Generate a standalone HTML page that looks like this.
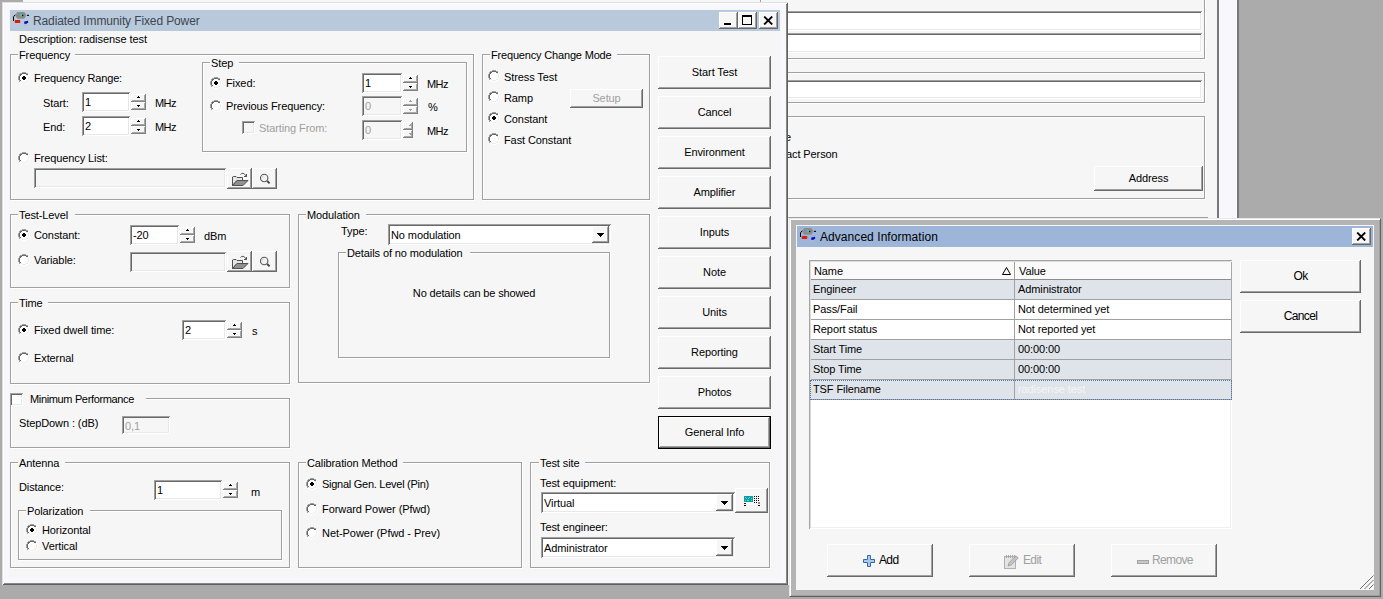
<!DOCTYPE html>
<html><head><meta charset="utf-8"><title>Radiated Immunity Fixed Power</title><style>
html,body{margin:0;padding:0;background:#ababab;}
body{width:1383px;height:599px;overflow:hidden;position:relative;font-family:"Liberation Sans",sans-serif;font-size:11px;}
body div,body svg{position:absolute;box-sizing:border-box;}
.t{white-space:nowrap;letter-spacing:-0.1px;}
.win{background:#f6f6f6;box-shadow:inset 1px 1px 0 #e0e0e0,inset -1px -1px 0 #606060,inset 2px 2px 0 #fff,inset -2px -2px 0 #888,inset 0 0 0 7px #f8f8fc;}
.win2{background:#f6f6f6;border:1px solid;border-color:#e8e8e8 #606060 #606060 #e8e8e8;box-shadow:inset 1px 1px 0 #fff,inset -1px -1px 0 #a0a0a0,inset 0 0 0 6px #b4b4b4;}
.grp{border:1px solid #a0a0a0;box-shadow:1px 1px 0 #fff,inset 1px 1px 0 #fff;}
.btn{background:#f6f6f6;box-shadow:inset -1px -1px 0 #696969,inset 1px 1px 0 #fff,inset -2px -2px 0 #a0a0a0;}
.btn1{background:#f6f6f6;box-shadow:inset -1px -1px 0 #808080,inset 1px 1px 0 #fff,inset -2px -2px 0 #a8a8a8;}
.edit{background:#fff;box-shadow:inset 1px 1px 0 #a0a0a0,inset -1px -1px 0 #fff,inset 2px 2px 0 #696969,inset -2px -2px 0 #e8e8e8;}
.edit.dis{background:#f6f6f6;}
.lv{background:#fff;box-shadow:inset 1px 1px 0 #a4a4a4,inset -1px -1px 0 #fff,inset 2px 2px 0 #dcdcdc,inset -2px -2px 0 #f0f0f0;}
.hdr{background:#f6f6f6;box-shadow:inset -1px -1px 0 #808080,inset 1px 1px 0 #fff;}
</style></head><body>
<svg width="0" height="0" style="left:0;top:0"><defs><g id="ru"><rect x="4" y="0" width="4" height="1" fill="#a0a0a0"/><rect x="2" y="1" width="2" height="1" fill="#a0a0a0"/><rect x="4" y="1" width="4" height="1" fill="#696969"/><rect x="8" y="1" width="2" height="1" fill="#a0a0a0"/><rect x="1" y="2" width="1" height="1" fill="#a0a0a0"/><rect x="2" y="2" width="2" height="1" fill="#696969"/><rect x="4" y="2" width="4" height="1" fill="#ffffff"/><rect x="8" y="2" width="2" height="1" fill="#696969"/><rect x="10" y="2" width="1" height="1" fill="#ffffff"/><rect x="1" y="3" width="1" height="1" fill="#a0a0a0"/><rect x="2" y="3" width="1" height="1" fill="#696969"/><rect x="3" y="3" width="6" height="1" fill="#ffffff"/><rect x="9" y="3" width="1" height="1" fill="#ececec"/><rect x="10" y="3" width="1" height="1" fill="#ffffff"/><rect x="0" y="4" width="1" height="1" fill="#a0a0a0"/><rect x="1" y="4" width="1" height="1" fill="#696969"/><rect x="2" y="4" width="8" height="1" fill="#ffffff"/><rect x="10" y="4" width="1" height="1" fill="#ececec"/><rect x="11" y="4" width="1" height="1" fill="#ffffff"/><rect x="0" y="5" width="1" height="1" fill="#a0a0a0"/><rect x="1" y="5" width="1" height="1" fill="#696969"/><rect x="2" y="5" width="8" height="1" fill="#ffffff"/><rect x="10" y="5" width="1" height="1" fill="#ececec"/><rect x="11" y="5" width="1" height="1" fill="#ffffff"/><rect x="0" y="6" width="1" height="1" fill="#a0a0a0"/><rect x="1" y="6" width="1" height="1" fill="#696969"/><rect x="2" y="6" width="8" height="1" fill="#ffffff"/><rect x="10" y="6" width="1" height="1" fill="#ececec"/><rect x="11" y="6" width="1" height="1" fill="#ffffff"/><rect x="0" y="7" width="1" height="1" fill="#a0a0a0"/><rect x="1" y="7" width="1" height="1" fill="#696969"/><rect x="2" y="7" width="8" height="1" fill="#ffffff"/><rect x="10" y="7" width="1" height="1" fill="#ececec"/><rect x="11" y="7" width="1" height="1" fill="#ffffff"/><rect x="1" y="8" width="1" height="1" fill="#a0a0a0"/><rect x="2" y="8" width="1" height="1" fill="#696969"/><rect x="3" y="8" width="6" height="1" fill="#ffffff"/><rect x="9" y="8" width="1" height="1" fill="#ececec"/><rect x="10" y="8" width="1" height="1" fill="#ffffff"/><rect x="1" y="9" width="1" height="1" fill="#a0a0a0"/><rect x="2" y="9" width="2" height="1" fill="#ececec"/><rect x="4" y="9" width="4" height="1" fill="#ffffff"/><rect x="8" y="9" width="2" height="1" fill="#ececec"/><rect x="10" y="9" width="1" height="1" fill="#ffffff"/><rect x="2" y="10" width="2" height="1" fill="#ffffff"/><rect x="4" y="10" width="4" height="1" fill="#ececec"/><rect x="8" y="10" width="2" height="1" fill="#ffffff"/><rect x="4" y="11" width="4" height="1" fill="#ffffff"/></g><g id="rc"><rect x="4" y="0" width="4" height="1" fill="#a0a0a0"/><rect x="2" y="1" width="2" height="1" fill="#a0a0a0"/><rect x="4" y="1" width="4" height="1" fill="#696969"/><rect x="8" y="1" width="2" height="1" fill="#a0a0a0"/><rect x="1" y="2" width="1" height="1" fill="#a0a0a0"/><rect x="2" y="2" width="2" height="1" fill="#696969"/><rect x="4" y="2" width="4" height="1" fill="#ffffff"/><rect x="8" y="2" width="2" height="1" fill="#696969"/><rect x="10" y="2" width="1" height="1" fill="#ffffff"/><rect x="1" y="3" width="1" height="1" fill="#a0a0a0"/><rect x="2" y="3" width="1" height="1" fill="#696969"/><rect x="3" y="3" width="6" height="1" fill="#ffffff"/><rect x="9" y="3" width="1" height="1" fill="#ececec"/><rect x="10" y="3" width="1" height="1" fill="#ffffff"/><rect x="0" y="4" width="1" height="1" fill="#a0a0a0"/><rect x="1" y="4" width="1" height="1" fill="#696969"/><rect x="2" y="4" width="8" height="1" fill="#ffffff"/><rect x="10" y="4" width="1" height="1" fill="#ececec"/><rect x="11" y="4" width="1" height="1" fill="#ffffff"/><rect x="0" y="5" width="1" height="1" fill="#a0a0a0"/><rect x="1" y="5" width="1" height="1" fill="#696969"/><rect x="2" y="5" width="8" height="1" fill="#ffffff"/><rect x="10" y="5" width="1" height="1" fill="#ececec"/><rect x="11" y="5" width="1" height="1" fill="#ffffff"/><rect x="0" y="6" width="1" height="1" fill="#a0a0a0"/><rect x="1" y="6" width="1" height="1" fill="#696969"/><rect x="2" y="6" width="8" height="1" fill="#ffffff"/><rect x="10" y="6" width="1" height="1" fill="#ececec"/><rect x="11" y="6" width="1" height="1" fill="#ffffff"/><rect x="0" y="7" width="1" height="1" fill="#a0a0a0"/><rect x="1" y="7" width="1" height="1" fill="#696969"/><rect x="2" y="7" width="8" height="1" fill="#ffffff"/><rect x="10" y="7" width="1" height="1" fill="#ececec"/><rect x="11" y="7" width="1" height="1" fill="#ffffff"/><rect x="1" y="8" width="1" height="1" fill="#a0a0a0"/><rect x="2" y="8" width="1" height="1" fill="#696969"/><rect x="3" y="8" width="6" height="1" fill="#ffffff"/><rect x="9" y="8" width="1" height="1" fill="#ececec"/><rect x="10" y="8" width="1" height="1" fill="#ffffff"/><rect x="1" y="9" width="1" height="1" fill="#a0a0a0"/><rect x="2" y="9" width="2" height="1" fill="#ececec"/><rect x="4" y="9" width="4" height="1" fill="#ffffff"/><rect x="8" y="9" width="2" height="1" fill="#ececec"/><rect x="10" y="9" width="1" height="1" fill="#ffffff"/><rect x="2" y="10" width="2" height="1" fill="#ffffff"/><rect x="4" y="10" width="4" height="1" fill="#ececec"/><rect x="8" y="10" width="2" height="1" fill="#ffffff"/><rect x="4" y="11" width="4" height="1" fill="#ffffff"/><rect x="5" y="4" width="2" height="4" fill="#000"/><rect x="4" y="5" width="4" height="2" fill="#000"/></g></defs></svg>
<div style="left:0;top:0;width:1383px;height:599px;background:#ababab"></div>
<div style="left:23px;top:0px;width:1196px;height:585px;background:#f6f6f6;"></div>
<div style="left:1217px;top:0px;width:22px;height:585px;background:#f7f7fc;border-left:2px solid #787878;border-right:2px solid #787878;"></div>
<div class="grp" style="left:760px;top:-10px;width:445px;height:69px;"></div>
<div class="edit" style="left:760px;top:11px;width:442px;height:20px;"></div>
<div class="edit" style="left:760px;top:33px;width:442px;height:20px;"></div>
<div class="grp" style="left:760px;top:72px;width:445px;height:31px;"></div>
<div class="edit" style="left:760px;top:80px;width:442px;height:19px;"></div>
<div class="grp" style="left:760px;top:116px;width:445px;height:83px;"></div>
<div class="t" style="left:785px;top:131px;font-size:11px;line-height:13px;color:#000;">e</div>
<div class="t" style="left:786px;top:148px;font-size:11px;line-height:13px;color:#000;">act Person</div>
<div class="btn" style="left:1094px;top:166px;width:109px;height:25px;"></div>
<div class="t" style="left:1094px;top:172px;font-size:11px;line-height:13px;color:#000;width:109px;text-align:center;">Address</div>
<div style="left:760px;top:217px;width:448px;height:1px;background:#a0a0a0;"></div>
<div style="left:760px;top:218px;width:448px;height:1px;background:#fff;"></div>
<div class="win" style="left:2px;top:2px;width:786px;height:583px;"></div>
<div style="left:10px;top:10px;width:770px;height:21px;background:#b9c9dc;"></div>
<svg style="left:13px;top:12px" width="17" height="16" viewBox="0 0 17 16"><polygon points="1.8,3.3 4.4,0 11.3,0 13.5,3.3 11.3,6.7 4.4,6.7" fill="#8c8c8c"/><rect x="6.8" y="1.9" width="2.4" height="2.2" fill="#3cc8b4"/><rect x="9" y="2.8" width="1.3" height="1.3" fill="#000"/><rect x="14" y="2.8" width="2" height="1.1" fill="#000"/><path d="M2.2 2.8 L0.8 4.2 L0.5 5 L0.5 9" fill="none" stroke="#000" stroke-width="1"/><rect x="1.8" y="8" width="5.4" height="3" fill="#d81e10"/><path d="M11 11.6 L11.4 9.6 L15 8.7 L15.3 10.4 L13 11.9 Z" fill="#0a0acd"/><rect x="10.5" y="12.4" width="3.6" height="1.6" fill="#b4bcc6" opacity="0.8"/></svg>
<div class="t" style="left:33px;top:14px;font-size:12px;line-height:14px;color:#3c4650;letter-spacing:-0.12px;">Radiated Immunity Fixed Power</div>
<div class="btn" style="left:719px;top:12px;width:19px;height:17px;"></div>
<div style="left:724px;top:23px;width:7px;height:2px;background:#000;"></div>
<div class="btn" style="left:738px;top:12px;width:19px;height:17px;"></div>
<div style="left:742px;top:15px;width:10px;height:10px;border:1px solid #000;border-top:2px solid #000;"></div>
<div class="btn" style="left:759px;top:12px;width:19px;height:17px;"></div>
<svg style="left:763px;top:16px" width="11" height="9" viewBox="0 0 11 9"><path d="M1.2 0.5 L9.2 8.5 M9.2 0.5 L1.2 8.5" stroke="#000" stroke-width="1.8"/></svg>
<div class="t" style="left:19px;top:33px;font-size:11px;line-height:13px;color:#000;letter-spacing:-0.06px;">Description: radisense test</div>
<div class="grp" style="left:10px;top:54px;width:464px;height:146px;"></div>
<div style="left:18px;top:48px;width:57px;height:14px;background:#f6f6f6;"></div>
<div class="t" style="left:19px;top:49px;font-size:11px;line-height:13px;color:#000;">Frequency</div>
<svg style="left:18px;top:72px" width="12" height="12" viewBox="0 0 12 12" shape-rendering="crispEdges"><use href="#rc"/></svg>
<div class="t" style="left:34px;top:72px;font-size:11px;line-height:13px;color:#000;letter-spacing:-0.156px;">Frequency Range:</div>
<div class="t" style="left:43px;top:97px;font-size:11px;line-height:13px;color:#000;">Start:</div>
<div class="edit" style="left:82px;top:92px;width:48px;height:20px;"></div>
<div class="t" style="left:85px;top:96px;font-size:11px;line-height:13px;color:#000;">1</div>
<div class="btn1" style="left:131px;top:94px;width:15px;height:8px;"></div>
<div style="left:138px;top:96px;width:1px;height:1px;background:#000"></div>
<div style="left:137px;top:97px;width:3px;height:1px;background:#000"></div>
<div class="btn1" style="left:131px;top:102px;width:15px;height:8px;"></div>
<div style="left:137px;top:105px;width:3px;height:1px;background:#000"></div>
<div style="left:138px;top:106px;width:1px;height:1px;background:#000"></div>
<div class="t" style="left:155px;top:97px;font-size:11px;line-height:13px;color:#000;letter-spacing:-0.6px;">MHz</div>
<div class="t" style="left:43px;top:121px;font-size:11px;line-height:13px;color:#000;">End:</div>
<div class="edit" style="left:82px;top:116px;width:48px;height:20px;"></div>
<div class="t" style="left:85px;top:120px;font-size:11px;line-height:13px;color:#000;">2</div>
<div class="btn1" style="left:131px;top:118px;width:15px;height:8px;"></div>
<div style="left:138px;top:120px;width:1px;height:1px;background:#000"></div>
<div style="left:137px;top:121px;width:3px;height:1px;background:#000"></div>
<div class="btn1" style="left:131px;top:126px;width:15px;height:8px;"></div>
<div style="left:137px;top:129px;width:3px;height:1px;background:#000"></div>
<div style="left:138px;top:130px;width:1px;height:1px;background:#000"></div>
<div class="t" style="left:155px;top:121px;font-size:11px;line-height:13px;color:#000;letter-spacing:-0.6px;">MHz</div>
<svg style="left:18px;top:152px" width="12" height="12" viewBox="0 0 12 12" shape-rendering="crispEdges"><use href="#ru"/></svg>
<div class="t" style="left:34px;top:152px;font-size:11px;line-height:13px;color:#000;">Frequency List:</div>
<div class="edit dis" style="left:34px;top:168px;width:192px;height:20px;"></div>
<div class="btn" style="left:227px;top:168px;width:25px;height:21px;"></div>
<svg style="left:231px;top:172px" width="18" height="15" viewBox="0 0 18 15"><path d="M1.5 13.5 V5 L2.5 4.5 H5 L6 5.5 H11.5 V8.5 H6 Z" fill="#e6e6e6" stroke="#505050" stroke-width="1"/><path d="M1.5 13.5 L6 8.5 H17 L12 13.5 Z" fill="#909090" stroke="#505050" stroke-width="1"/><path d="M9.5 2.5 Q12 -0.6 15.2 4" fill="none" stroke="#505050" stroke-width="1"/><path d="M15.5 4.8 V2 M15.5 4.5 H13" fill="none" stroke="#505050" stroke-width="1"/></svg>
<div class="btn" style="left:252px;top:168px;width:25px;height:21px;"></div>
<svg style="left:259px;top:173px" width="13" height="13" viewBox="0 0 13 13"><circle cx="5.2" cy="5" r="3.7" fill="#f2f2f2" stroke="#585858" stroke-width="1.1"/><path d="M3.2 4.2 L4.3 3.2" stroke="#b0b0b0" stroke-width="1"/><path d="M8.2 8 L10.6 10.4" stroke="#484848" stroke-width="2"/></svg>
<div class="grp" style="left:202px;top:62px;width:265px;height:90px;"></div>
<div style="left:210px;top:56px;width:29px;height:14px;background:#f6f6f6;"></div>
<div class="t" style="left:211px;top:57px;font-size:11px;line-height:13px;color:#000;">Step</div>
<svg style="left:210px;top:77px" width="12" height="12" viewBox="0 0 12 12" shape-rendering="crispEdges"><use href="#rc"/></svg>
<div class="t" style="left:226px;top:77px;font-size:11px;line-height:13px;color:#000;">Fixed:</div>
<div class="edit" style="left:362px;top:73px;width:40px;height:20px;"></div>
<div class="t" style="left:365px;top:77px;font-size:11px;line-height:13px;color:#000;">1</div>
<div class="btn1" style="left:403px;top:75px;width:15px;height:8px;"></div>
<div style="left:410px;top:77px;width:1px;height:1px;background:#000"></div>
<div style="left:409px;top:78px;width:3px;height:1px;background:#000"></div>
<div class="btn1" style="left:403px;top:83px;width:15px;height:8px;"></div>
<div style="left:409px;top:86px;width:3px;height:1px;background:#000"></div>
<div style="left:410px;top:87px;width:1px;height:1px;background:#000"></div>
<div class="t" style="left:427px;top:78px;font-size:11px;line-height:13px;color:#000;letter-spacing:-0.6px;">MHz</div>
<svg style="left:210px;top:100px" width="12" height="12" viewBox="0 0 12 12" shape-rendering="crispEdges"><use href="#ru"/></svg>
<div class="t" style="left:226px;top:100px;font-size:11px;line-height:13px;color:#000;letter-spacing:-0.099px;">Previous Frequency:</div>
<div class="edit dis" style="left:362px;top:96px;width:40px;height:20px;"></div>
<div class="t" style="left:365px;top:100px;font-size:11px;line-height:13px;color:#a0a0a0;">0</div>
<div class="btn1" style="left:403px;top:98px;width:15px;height:8px;"></div>
<div style="left:410px;top:100px;width:1px;height:1px;background:#a0a0a0"></div>
<div style="left:409px;top:101px;width:3px;height:1px;background:#a0a0a0"></div>
<div class="btn1" style="left:403px;top:106px;width:15px;height:8px;"></div>
<div style="left:409px;top:109px;width:3px;height:1px;background:#a0a0a0"></div>
<div style="left:410px;top:110px;width:1px;height:1px;background:#a0a0a0"></div>
<div class="t" style="left:428px;top:101px;font-size:11px;line-height:13px;color:#000;">%</div>
<div class="edit dis" style="left:242px;top:121px;width:13px;height:13px;"></div>
<div class="t" style="left:259px;top:122px;font-size:11px;line-height:13px;color:#a0a0a0;">Starting From:</div>
<div class="edit dis" style="left:362px;top:120px;width:40px;height:20px;"></div>
<div class="t" style="left:365px;top:124px;font-size:11px;line-height:13px;color:#a0a0a0;">0</div>
<div class="btn1" style="left:403px;top:122px;width:10px;height:8px;"></div>
<div style="left:410px;top:124px;width:1px;height:1px;background:#a0a0a0"></div>
<div style="left:409px;top:125px;width:3px;height:1px;background:#a0a0a0"></div>
<div class="btn1" style="left:403px;top:130px;width:10px;height:8px;"></div>
<div style="left:409px;top:133px;width:3px;height:1px;background:#a0a0a0"></div>
<div style="left:410px;top:134px;width:1px;height:1px;background:#a0a0a0"></div>
<div class="t" style="left:427px;top:125px;font-size:11px;line-height:13px;color:#000;letter-spacing:-0.6px;">MHz</div>
<div class="grp" style="left:482px;top:54px;width:168px;height:146px;"></div>
<div style="left:490px;top:48px;width:127px;height:14px;background:#f6f6f6;"></div>
<div class="t" style="left:491px;top:49px;font-size:11px;line-height:13px;color:#000;letter-spacing:-0.173px;">Frequency Change Mode</div>
<svg style="left:488px;top:70px" width="12" height="12" viewBox="0 0 12 12" shape-rendering="crispEdges"><use href="#ru"/></svg>
<div class="t" style="left:504px;top:71px;font-size:11px;line-height:13px;color:#000;">Stress Test</div>
<svg style="left:488px;top:91px" width="12" height="12" viewBox="0 0 12 12" shape-rendering="crispEdges"><use href="#ru"/></svg>
<div class="t" style="left:504px;top:92px;font-size:11px;line-height:13px;color:#000;">Ramp</div>
<svg style="left:488px;top:112px" width="12" height="12" viewBox="0 0 12 12" shape-rendering="crispEdges"><use href="#rc"/></svg>
<div class="t" style="left:504px;top:113px;font-size:11px;line-height:13px;color:#000;">Constant</div>
<svg style="left:488px;top:133px" width="12" height="12" viewBox="0 0 12 12" shape-rendering="crispEdges"><use href="#ru"/></svg>
<div class="t" style="left:504px;top:134px;font-size:11px;line-height:13px;color:#000;">Fast Constant</div>
<div class="btn" style="left:570px;top:89px;width:73px;height:19px;"></div>
<div class="t" style="left:570px;top:92px;font-size:11px;line-height:13px;color:#a0a0a0;width:73px;text-align:center;">Setup</div>
<div class="btn" style="left:658px;top:56px;width:113px;height:33px;"></div>
<div class="t" style="left:658px;top:66px;font-size:11px;line-height:13px;color:#000;width:113px;text-align:center;">Start Test</div>
<div class="btn" style="left:658px;top:96px;width:113px;height:33px;"></div>
<div class="t" style="left:658px;top:106px;font-size:11px;line-height:13px;color:#000;width:113px;text-align:center;">Cancel</div>
<div class="btn" style="left:658px;top:136px;width:113px;height:33px;"></div>
<div class="t" style="left:658px;top:146px;font-size:11px;line-height:13px;color:#000;width:113px;text-align:center;">Environment</div>
<div class="btn" style="left:658px;top:176px;width:113px;height:33px;"></div>
<div class="t" style="left:658px;top:186px;font-size:11px;line-height:13px;color:#000;width:113px;text-align:center;">Amplifier</div>
<div class="btn" style="left:658px;top:216px;width:113px;height:33px;"></div>
<div class="t" style="left:658px;top:226px;font-size:11px;line-height:13px;color:#000;width:113px;text-align:center;">Inputs</div>
<div class="btn" style="left:658px;top:256px;width:113px;height:33px;"></div>
<div class="t" style="left:658px;top:266px;font-size:11px;line-height:13px;color:#000;width:113px;text-align:center;">Note</div>
<div class="btn" style="left:658px;top:296px;width:113px;height:33px;"></div>
<div class="t" style="left:658px;top:306px;font-size:11px;line-height:13px;color:#000;width:113px;text-align:center;">Units</div>
<div class="btn" style="left:658px;top:336px;width:113px;height:33px;"></div>
<div class="t" style="left:658px;top:346px;font-size:11px;line-height:13px;color:#000;width:113px;text-align:center;">Reporting</div>
<div class="btn" style="left:658px;top:376px;width:113px;height:33px;"></div>
<div class="t" style="left:658px;top:386px;font-size:11px;line-height:13px;color:#000;width:113px;text-align:center;">Photos</div>
<div style="left:658px;top:416px;width:113px;height:33px;background:#000;"></div>
<div class="btn" style="left:659px;top:417px;width:111px;height:31px;"></div>
<div class="t" style="left:658px;top:426px;font-size:11px;line-height:13px;color:#000;width:113px;text-align:center;">General Info</div>
<div class="grp" style="left:10px;top:214px;width:280px;height:74px;"></div>
<div style="left:18px;top:208px;width:57px;height:14px;background:#f6f6f6;"></div>
<div class="t" style="left:19px;top:209px;font-size:11px;line-height:13px;color:#000;">Test-Level</div>
<svg style="left:18px;top:229px" width="12" height="12" viewBox="0 0 12 12" shape-rendering="crispEdges"><use href="#rc"/></svg>
<div class="t" style="left:34px;top:229px;font-size:11px;line-height:13px;color:#000;">Constant:</div>
<div class="edit" style="left:130px;top:225px;width:49px;height:20px;"></div>
<div class="t" style="left:133px;top:229px;font-size:11px;line-height:13px;color:#000;">-20</div>
<div class="btn1" style="left:180px;top:227px;width:15px;height:8px;"></div>
<div style="left:187px;top:229px;width:1px;height:1px;background:#000"></div>
<div style="left:186px;top:230px;width:3px;height:1px;background:#000"></div>
<div class="btn1" style="left:180px;top:235px;width:15px;height:8px;"></div>
<div style="left:186px;top:238px;width:3px;height:1px;background:#000"></div>
<div style="left:187px;top:239px;width:1px;height:1px;background:#000"></div>
<div class="t" style="left:204px;top:230px;font-size:11px;line-height:13px;color:#000;">dBm</div>
<svg style="left:18px;top:254px" width="12" height="12" viewBox="0 0 12 12" shape-rendering="crispEdges"><use href="#ru"/></svg>
<div class="t" style="left:34px;top:254px;font-size:11px;line-height:13px;color:#000;">Variable:</div>
<div class="edit dis" style="left:130px;top:252px;width:96px;height:20px;"></div>
<div class="btn" style="left:227px;top:251px;width:25px;height:21px;"></div>
<svg style="left:231px;top:255px" width="18" height="15" viewBox="0 0 18 15"><path d="M1.5 13.5 V5 L2.5 4.5 H5 L6 5.5 H11.5 V8.5 H6 Z" fill="#e6e6e6" stroke="#505050" stroke-width="1"/><path d="M1.5 13.5 L6 8.5 H17 L12 13.5 Z" fill="#909090" stroke="#505050" stroke-width="1"/><path d="M9.5 2.5 Q12 -0.6 15.2 4" fill="none" stroke="#505050" stroke-width="1"/><path d="M15.5 4.8 V2 M15.5 4.5 H13" fill="none" stroke="#505050" stroke-width="1"/></svg>
<div class="btn" style="left:252px;top:251px;width:25px;height:21px;"></div>
<svg style="left:259px;top:256px" width="13" height="13" viewBox="0 0 13 13"><circle cx="5.2" cy="5" r="3.7" fill="#f2f2f2" stroke="#585858" stroke-width="1.1"/><path d="M3.2 4.2 L4.3 3.2" stroke="#b0b0b0" stroke-width="1"/><path d="M8.2 8 L10.6 10.4" stroke="#484848" stroke-width="2"/></svg>
<div class="grp" style="left:10px;top:302px;width:280px;height:82px;"></div>
<div style="left:18px;top:296px;width:30px;height:14px;background:#f6f6f6;"></div>
<div class="t" style="left:19px;top:297px;font-size:11px;line-height:13px;color:#000;">Time</div>
<svg style="left:18px;top:324px" width="12" height="12" viewBox="0 0 12 12" shape-rendering="crispEdges"><use href="#rc"/></svg>
<div class="t" style="left:34px;top:324px;font-size:11px;line-height:13px;color:#000;">Fixed dwell time:</div>
<div class="edit" style="left:182px;top:320px;width:44px;height:20px;"></div>
<div class="t" style="left:185px;top:324px;font-size:11px;line-height:13px;color:#000;">2</div>
<div class="btn1" style="left:227px;top:322px;width:15px;height:8px;"></div>
<div style="left:234px;top:324px;width:1px;height:1px;background:#000"></div>
<div style="left:233px;top:325px;width:3px;height:1px;background:#000"></div>
<div class="btn1" style="left:227px;top:330px;width:15px;height:8px;"></div>
<div style="left:233px;top:333px;width:3px;height:1px;background:#000"></div>
<div style="left:234px;top:334px;width:1px;height:1px;background:#000"></div>
<div class="t" style="left:252px;top:325px;font-size:11px;line-height:13px;color:#000;">s</div>
<svg style="left:18px;top:352px" width="12" height="12" viewBox="0 0 12 12" shape-rendering="crispEdges"><use href="#ru"/></svg>
<div class="t" style="left:34px;top:352px;font-size:11px;line-height:13px;color:#000;">External</div>
<div class="grp" style="left:10px;top:398px;width:280px;height:50px;"></div>
<div style="left:10px;top:392px;width:136px;height:14px;background:#f6f6f6;"></div>
<div class="edit" style="left:10px;top:393px;width:13px;height:13px;"></div>
<div class="t" style="left:30px;top:393px;font-size:11px;line-height:13px;color:#000;letter-spacing:-0.349px;">Minimum Performance</div>
<div class="t" style="left:19px;top:417px;font-size:11px;line-height:13px;color:#000;">StepDown : (dB)</div>
<div class="edit dis" style="left:122px;top:416px;width:48px;height:18px;"></div>
<div class="t" style="left:125px;top:420px;font-size:11px;line-height:13px;color:#a0a0a0;">0,1</div>
<div class="grp" style="left:10px;top:462px;width:280px;height:106px;"></div>
<div style="left:18px;top:456px;width:47px;height:14px;background:#f6f6f6;"></div>
<div class="t" style="left:19px;top:457px;font-size:11px;line-height:13px;color:#000;">Antenna</div>
<div class="t" style="left:19px;top:481px;font-size:11px;line-height:13px;color:#000;">Distance:</div>
<div class="edit" style="left:154px;top:480px;width:68px;height:20px;"></div>
<div class="t" style="left:157px;top:484px;font-size:11px;line-height:13px;color:#000;">1</div>
<div class="btn1" style="left:223px;top:482px;width:15px;height:8px;"></div>
<div style="left:230px;top:484px;width:1px;height:1px;background:#000"></div>
<div style="left:229px;top:485px;width:3px;height:1px;background:#000"></div>
<div class="btn1" style="left:223px;top:490px;width:15px;height:8px;"></div>
<div style="left:229px;top:493px;width:3px;height:1px;background:#000"></div>
<div style="left:230px;top:494px;width:1px;height:1px;background:#000"></div>
<div class="t" style="left:251px;top:486px;font-size:11px;line-height:13px;color:#000;">m</div>
<div class="grp" style="left:18px;top:510px;width:264px;height:50px;"></div>
<div style="left:26px;top:504px;width:64px;height:14px;background:#f6f6f6;"></div>
<div class="t" style="left:27px;top:505px;font-size:11px;line-height:13px;color:#000;">Polarization</div>
<svg style="left:26px;top:524px" width="12" height="12" viewBox="0 0 12 12" shape-rendering="crispEdges"><use href="#rc"/></svg>
<div class="t" style="left:42px;top:524px;font-size:11px;line-height:13px;color:#000;">Horizontal</div>
<svg style="left:26px;top:540px" width="12" height="12" viewBox="0 0 12 12" shape-rendering="crispEdges"><use href="#ru"/></svg>
<div class="t" style="left:42px;top:540px;font-size:11px;line-height:13px;color:#000;">Vertical</div>
<div class="grp" style="left:298px;top:214px;width:352px;height:169px;"></div>
<div style="left:306px;top:208px;width:60px;height:14px;background:#f6f6f6;"></div>
<div class="t" style="left:307px;top:209px;font-size:11px;line-height:13px;color:#000;">Modulation</div>
<div class="t" style="left:341px;top:225px;font-size:11px;line-height:13px;color:#000;">Type:</div>
<div class="edit" style="left:388px;top:224px;width:223px;height:21px;"></div>
<div class="t" style="left:391px;top:229px;font-size:11px;line-height:13px;color:#000;">No modulation</div>
<div class="btn" style="left:592px;top:226px;width:17px;height:17px;"></div>
<div style="left:597px;top:233px;width:7px;height:1px;background:#000"></div>
<div style="left:598px;top:234px;width:5px;height:1px;background:#000"></div>
<div style="left:599px;top:235px;width:3px;height:1px;background:#000"></div>
<div style="left:600px;top:236px;width:1px;height:1px;background:#000"></div>
<div class="grp" style="left:338px;top:252px;width:272px;height:106px;"></div>
<div style="left:346px;top:246px;width:124px;height:14px;background:#f6f6f6;"></div>
<div class="t" style="left:347px;top:247px;font-size:11px;line-height:13px;color:#000;">Details of no modulation</div>
<div class="t" style="left:338px;top:287px;font-size:11px;line-height:13px;color:#000;letter-spacing:-0.153px;width:272px;text-align:center;">No details can be showed</div>
<div class="grp" style="left:298px;top:462px;width:224px;height:106px;"></div>
<div style="left:306px;top:456px;width:97px;height:14px;background:#f6f6f6;"></div>
<div class="t" style="left:307px;top:457px;font-size:11px;line-height:13px;color:#000;letter-spacing:-0.101px;">Calibration Method</div>
<svg style="left:306px;top:478px" width="12" height="12" viewBox="0 0 12 12" shape-rendering="crispEdges"><use href="#rc"/></svg>
<div class="t" style="left:322px;top:478px;font-size:11px;line-height:13px;color:#000;letter-spacing:-0.266px;">Signal Gen. Level (Pin)</div>
<svg style="left:306px;top:503px" width="12" height="12" viewBox="0 0 12 12" shape-rendering="crispEdges"><use href="#ru"/></svg>
<div class="t" style="left:322px;top:503px;font-size:11px;line-height:13px;color:#000;letter-spacing:-0.07px;">Forward Power (Pfwd)</div>
<svg style="left:306px;top:527px" width="12" height="12" viewBox="0 0 12 12" shape-rendering="crispEdges"><use href="#ru"/></svg>
<div class="t" style="left:322px;top:527px;font-size:11px;line-height:13px;color:#000;letter-spacing:-0.052px;">Net-Power (Pfwd - Prev)</div>
<div class="grp" style="left:530px;top:462px;width:240px;height:106px;"></div>
<div style="left:539px;top:456px;width:46px;height:14px;background:#f6f6f6;"></div>
<div class="t" style="left:540px;top:457px;font-size:11px;line-height:13px;color:#000;">Test site</div>
<div class="t" style="left:540px;top:477px;font-size:11px;line-height:13px;color:#000;">Test equipment:</div>
<div class="edit" style="left:541px;top:492px;width:194px;height:21px;"></div>
<div class="t" style="left:544px;top:497px;font-size:11px;line-height:13px;color:#000;">Virtual</div>
<div class="btn" style="left:716px;top:494px;width:17px;height:17px;"></div>
<div style="left:721px;top:501px;width:7px;height:1px;background:#000"></div>
<div style="left:722px;top:502px;width:5px;height:1px;background:#000"></div>
<div style="left:723px;top:503px;width:3px;height:1px;background:#000"></div>
<div style="left:724px;top:504px;width:1px;height:1px;background:#000"></div>
<div class="btn" style="left:735px;top:488px;width:33px;height:25px;"></div>
<div class="t" style="left:540px;top:521px;font-size:11px;line-height:13px;color:#000;">Test engineer:</div>
<div class="edit" style="left:541px;top:537px;width:194px;height:21px;"></div>
<div class="t" style="left:544px;top:542px;font-size:11px;line-height:13px;color:#000;">Administrator</div>
<div class="btn" style="left:716px;top:539px;width:17px;height:17px;"></div>
<div style="left:721px;top:546px;width:7px;height:1px;background:#000"></div>
<div style="left:722px;top:547px;width:5px;height:1px;background:#000"></div>
<div style="left:723px;top:548px;width:3px;height:1px;background:#000"></div>
<div style="left:724px;top:549px;width:1px;height:1px;background:#000"></div>
<svg style="left:744px;top:496px" width="17" height="10" viewBox="0 0 17 10" shape-rendering="crispEdges"><rect x="0" y="0" width="9" height="6" fill="#109c9c"/><g fill="#40e0e0"><rect x="1" y="1" width="1" height="1"/><rect x="2" y="2" width="1" height="1"/><rect x="4" y="2" width="1" height="1"/><rect x="5" y="1" width="1" height="1"/><rect x="7" y="2" width="1" height="1"/><rect x="1" y="4" width="1" height="1"/><rect x="3" y="4" width="2" height="1"/><rect x="7" y="4" width="1" height="1"/></g><g fill="#000"><rect x="10" y="0" width="1" height="1"/><rect x="12" y="0" width="1" height="1"/><rect x="14" y="0" width="1" height="1"/><rect x="10" y="2" width="1" height="1"/><rect x="12" y="2" width="1" height="1"/><rect x="14" y="2" width="1" height="1"/><rect x="10" y="4" width="1" height="1"/><rect x="12" y="4" width="1" height="1"/><rect x="14" y="4" width="1" height="1"/><rect x="10" y="6" width="1" height="1"/><rect x="12" y="6" width="1" height="1"/></g><rect x="14" y="6" width="2" height="2" fill="#909090"/><rect x="0" y="7" width="2" height="1" fill="#101080"/><rect x="0" y="9" width="2" height="1" fill="#000"/><rect x="14" y="9" width="2" height="1" fill="#000"/></svg>
<div class="win2" style="left:789px;top:218px;width:592px;height:379px;"></div>
<div style="left:797px;top:226px;width:576px;height:21px;background:#9db5d9;"></div>
<svg style="left:800px;top:228px" width="17" height="16" viewBox="0 0 17 16"><polygon points="1.8,3.3 4.4,0 11.3,0 13.5,3.3 11.3,6.7 4.4,6.7" fill="#8c8c8c"/><rect x="6.8" y="1.9" width="2.4" height="2.2" fill="#3cc8b4"/><rect x="9" y="2.8" width="1.3" height="1.3" fill="#000"/><rect x="14" y="2.8" width="2" height="1.1" fill="#000"/><path d="M2.2 2.8 L0.8 4.2 L0.5 5 L0.5 9" fill="none" stroke="#000" stroke-width="1"/><rect x="1.8" y="8" width="5.4" height="3" fill="#d81e10"/><path d="M11 11.6 L11.4 9.6 L15 8.7 L15.3 10.4 L13 11.9 Z" fill="#0a0acd"/><rect x="10.5" y="12.4" width="3.6" height="1.6" fill="#b4bcc6" opacity="0.8"/></svg>
<div class="t" style="left:820px;top:230px;font-size:12px;line-height:14px;color:#000;letter-spacing:0.06px;">Advanced Information</div>
<div class="btn" style="left:1352px;top:228px;width:19px;height:17px;"></div>
<svg style="left:1356px;top:232px" width="11" height="9" viewBox="0 0 11 9"><path d="M1.2 0.5 L9.2 8.5 M9.2 0.5 L1.2 8.5" stroke="#000" stroke-width="1.8"/></svg>
<div class="lv" style="left:809px;top:260px;width:423px;height:269px;"></div>
<div style="left:811px;top:262px;width:420px;height:17px;background:#fafafa;"></div>
<div style="left:811px;top:279px;width:420px;height:1px;background:#8c8c8c;"></div>
<div style="left:1014px;top:262px;width:1px;height:17px;background:#a0a0a0;"></div>
<div style="left:1015px;top:262px;width:1px;height:17px;background:#fff;"></div>
<div class="t" style="left:814px;top:265px;font-size:11px;line-height:13px;color:#000;">Name</div>
<div class="t" style="left:1019px;top:265px;font-size:11px;line-height:13px;color:#000;">Value</div>
<svg style="left:1002px;top:267px" width="9" height="8" viewBox="0 0 9 8"><path d="M0.5 7.5 L4.5 0.5 L8.5 7.5 Z" fill="none" stroke="#000" stroke-width="1"/></svg>
<div style="left:811px;top:280px;width:420px;height:20px;background:#dfe4ea;border-bottom:1px solid #a0a0a0;"></div>
<div style="left:1014px;top:280px;width:1px;height:20px;background:#a0a0a0;"></div>
<div class="t" style="left:813px;top:283px;font-size:11px;line-height:13px;color:#000;">Engineer</div>
<div class="t" style="left:1018px;top:283px;font-size:11px;line-height:13px;color:#000;">Administrator</div>
<div style="left:811px;top:300px;width:420px;height:20px;background:#fff;border-bottom:1px solid #a0a0a0;"></div>
<div style="left:1014px;top:300px;width:1px;height:20px;background:#a0a0a0;"></div>
<div class="t" style="left:813px;top:303px;font-size:11px;line-height:13px;color:#000;">Pass/Fail</div>
<div class="t" style="left:1018px;top:303px;font-size:11px;line-height:13px;color:#000;">Not determined yet</div>
<div style="left:811px;top:320px;width:420px;height:20px;background:#fff;border-bottom:1px solid #a0a0a0;"></div>
<div style="left:1014px;top:320px;width:1px;height:20px;background:#a0a0a0;"></div>
<div class="t" style="left:813px;top:323px;font-size:11px;line-height:13px;color:#000;">Report status</div>
<div class="t" style="left:1018px;top:323px;font-size:11px;line-height:13px;color:#000;">Not reported yet</div>
<div style="left:811px;top:340px;width:420px;height:20px;background:#dfe4ea;border-bottom:1px solid #a0a0a0;"></div>
<div style="left:1014px;top:340px;width:1px;height:20px;background:#a0a0a0;"></div>
<div class="t" style="left:813px;top:343px;font-size:11px;line-height:13px;color:#000;">Start Time</div>
<div class="t" style="left:1018px;top:343px;font-size:11px;line-height:13px;color:#000;">00:00:00</div>
<div style="left:811px;top:360px;width:420px;height:20px;background:#dfe4ea;border-bottom:1px solid #a0a0a0;"></div>
<div style="left:1014px;top:360px;width:1px;height:20px;background:#a0a0a0;"></div>
<div class="t" style="left:813px;top:363px;font-size:11px;line-height:13px;color:#000;">Stop Time</div>
<div class="t" style="left:1018px;top:363px;font-size:11px;line-height:13px;color:#000;">00:00:00</div>
<div style="left:811px;top:380px;width:420px;height:20px;background:#dfe4ea;border-bottom:1px solid #a0a0a0;"></div>
<div style="left:1014px;top:380px;width:1px;height:20px;background:#a0a0a0;"></div>
<div class="t" style="left:813px;top:383px;font-size:11px;line-height:13px;color:#000;">TSF Filename</div>
<div class="t" style="left:1018px;top:383px;font-size:11px;line-height:13px;color:#f4f6f8;">radisense test</div>
<div style="left:1231px;top:262px;width:1px;height:138px;background:#a8a8a8;"></div>
<div style="left:810px;top:380px;width:422px;height:20px;border:1px dotted #5078a8;"></div>
<div class="btn" style="left:1240px;top:260px;width:121px;height:33px;"></div>
<div class="t" style="left:1240px;top:269px;font-size:12px;line-height:14px;color:#000;letter-spacing:-0.65px;width:121px;text-align:center;">Ok</div>
<div class="btn" style="left:1240px;top:300px;width:121px;height:33px;"></div>
<div class="t" style="left:1240px;top:309px;font-size:12px;line-height:14px;color:#000;letter-spacing:-0.65px;width:121px;text-align:center;">Cancel</div>
<div class="btn" style="left:827px;top:544px;width:106px;height:33px;"></div>
<div class="t" style="left:879px;top:553px;font-size:12px;line-height:14px;color:#000;letter-spacing:-0.65px;">Add</div>
<div class="btn" style="left:969px;top:544px;width:106px;height:33px;"></div>
<div class="t" style="left:1023px;top:553px;font-size:12px;line-height:14px;color:#a0a0a0;letter-spacing:-0.65px;">Edit</div>
<div class="btn" style="left:1111px;top:544px;width:106px;height:33px;"></div>
<div class="t" style="left:1152px;top:553px;font-size:12px;line-height:14px;color:#a0a0a0;letter-spacing:-0.65px;">Remove</div>
<svg style="left:863px;top:555px" width="12" height="12" viewBox="0 0 12 12"><path d="M4.5 0.5 H7.5 V4.5 H11.5 V7.5 H7.5 V11.5 H4.5 V7.5 H0.5 V4.5 H4.5 Z" fill="#a8ccf4" stroke="#3868a8" stroke-width="1"/></svg>
<svg style="left:1004px;top:554px" width="15" height="15" viewBox="0 0 15 15"><rect x="0.5" y="2.5" width="11" height="12" fill="#e4e4e4" stroke="#b0b0b0"/><path d="M2.5 1 V4 M4.5 1 V4 M6.5 1 V4 M8.5 1 V4 M10.5 1 V4" stroke="#a8a8a8"/><path d="M4 12 L5.2 8.5 L12 1.8 L14.2 4 L7.5 10.8 Z" fill="#c4c4c4" stroke="#989898" stroke-width="0.8"/></svg>
<div style="left:1137px;top:560px;width:12px;height:4px;background:#c8c8c8;border:1px solid #a4a4a4;"></div>
<svg style="left:1360px;top:575px" width="14" height="15" viewBox="0 0 14 15"><path d="M13.5 0.5 L0 14 M13.5 5 L4.5 14 M13.5 9.5 L9 14" stroke="#707070" stroke-width="1"/></svg>
</body></html>
